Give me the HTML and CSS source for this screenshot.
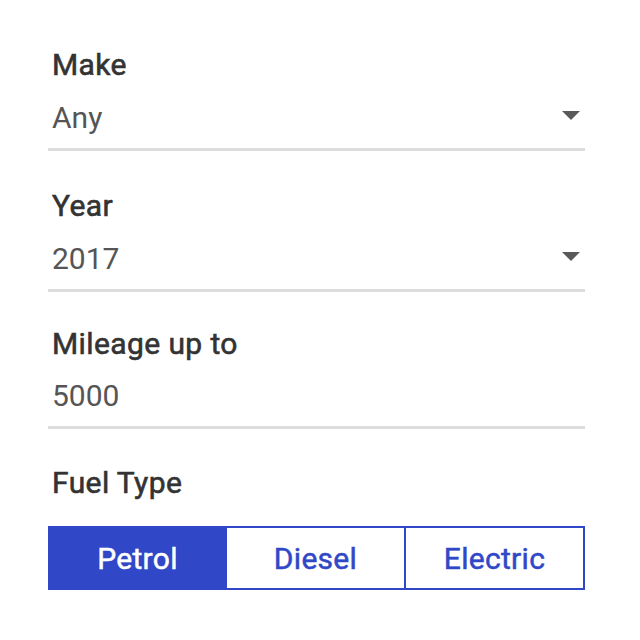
FILE: index.html
```html
<!DOCTYPE html>
<html>
<head>
<meta charset="utf-8">
<link rel="stylesheet" href="styles.css">
</head>
<body>
<form class="form">
  <div class="field">
    <div class="label">Make</div>
    <div class="control">
      <span class="value">Any</span>
      <svg class="arrow" width="18" height="9" viewBox="0 0 18 9"><polygon points="0,0 18,0 9,9" fill="#5a5a5a"/></svg>
    </div>
  </div>
  <div class="field">
    <div class="label">Year</div>
    <div class="control">
      <span class="value">2017</span>
      <svg class="arrow" width="18" height="9" viewBox="0 0 18 9"><polygon points="0,0 18,0 9,9" fill="#5a5a5a"/></svg>
    </div>
  </div>
  <div class="field field-text">
    <div class="label">Mileage up to</div>
    <div class="control">
      <span class="value">5000</span>
    </div>
  </div>
  <div class="fuel">
    <div class="label">Fuel Type</div>
    <div class="segments">
      <div class="seg active">Petrol</div>
      <div class="seg">Diesel</div>
      <div class="seg">Electric</div>
    </div>
  </div>
</form>
</body>
</html>
```
FILE: styles.css
```css
html, body {
  margin: 0;
  padding: 0;
  background: #ffffff;
}
body {
  font-family: Roboto, "Liberation Sans", sans-serif;
}
.form {
  width: 537px;
  padding: 47px 0 0 48px;
  display: flex;
  flex-direction: column;
  gap: 37px;
}
.field-text {
  margin-top: -3px;
}
.label {
  font-size: 30px;
  line-height: 36px;
  font-weight: 400;
  -webkit-text-stroke: 0.6px #333333;
  letter-spacing: 0.4px;
  color: #333333;
  padding-left: 4px;
}
.control {
  margin-top: 17px;
  display: flex;
  align-items: center;
  justify-content: space-between;
  height: 36px;
  padding-bottom: 12px;
  border-bottom: 3px solid #dddddd;
}
.field-text .control {
  margin-top: 16px;
}
.value {
  font-size: 30px;
  line-height: 36px;
  color: #555555;
  padding-left: 4px;
}
.arrow {
  margin-right: 5px;
  margin-bottom: 5px;
}
.fuel {
  margin-top: -1px;
}
.segments {
  margin-top: 25px;
  display: grid;
  grid-template-columns: repeat(3, 1fr);
  height: 64px;
}
.seg {
  display: flex;
  align-items: center;
  justify-content: center;
  border: 2px solid #3048c8;
  font-size: 30px;
  font-weight: 400;
  -webkit-text-stroke: 0.5px currentColor;
  letter-spacing: 0.3px;
  color: #3048c8;
  background: #ffffff;
}
.seg + .seg {
  margin-left: -2px;
}
.seg.active {
  background: #3048c8;
  color: #ffffff;
}
```
